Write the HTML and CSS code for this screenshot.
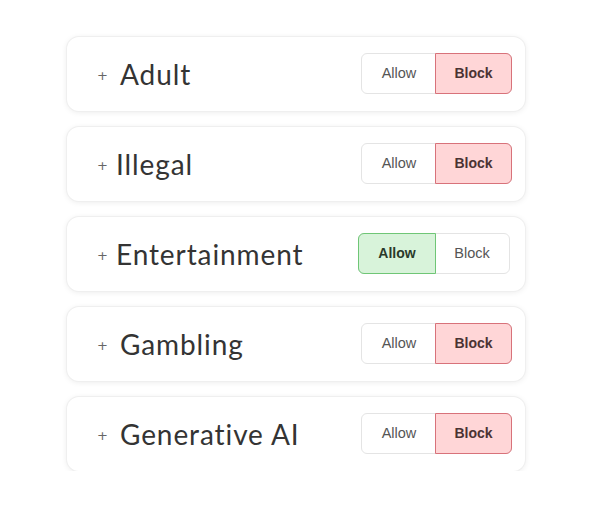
FILE: index.html
```html
<!DOCTYPE html>
<html>
<head>
<meta charset="utf-8">
<link rel="stylesheet" href="styles.css">
</head>
<body>
<div class="list">
  <div class="card">
    <div class="title"><span class="plus">+</span><span class="name">Adult</span></div>
    <div class="toggle"><span class="btn">Allow</span><span class="btn block on">Block</span></div>
  </div>
  <div class="card">
    <div class="title"><span class="plus">+</span><span class="name tight">Illegal</span></div>
    <div class="toggle"><span class="btn">Allow</span><span class="btn block on">Block</span></div>
  </div>
  <div class="card">
    <div class="title"><span class="plus">+</span><span class="name tight">Entertainment</span></div>
    <div class="toggle alt"><span class="btn allow on">Allow</span><span class="btn">Block</span></div>
  </div>
  <div class="card">
    <div class="title"><span class="plus">+</span><span class="name">Gambling</span></div>
    <div class="toggle"><span class="btn">Allow</span><span class="btn block on">Block</span></div>
  </div>
  <div class="card">
    <div class="title"><span class="plus">+</span><span class="name">Generative AI</span></div>
    <div class="toggle"><span class="btn">Allow</span><span class="btn block on">Block</span></div>
  </div>
</div>
</body>
</html>
```
FILE: styles.css
```css
html, body {
  margin: 0;
  padding: 0;
  background: #ffffff;
}
.list {
  display: flex;
  flex-direction: column;
  gap: 16px;
  padding: 37px 0 0 67px;
  width: 458px;
}
.card {
  height: 74px;
  box-sizing: border-box;
  background: #fff;
  border-radius: 12px;
  box-shadow: 0 0 0 1px #efefef, 0 1px 6px rgba(0,0,0,0.09);
  display: flex;
  align-items: center;
  justify-content: space-between;
  padding: 0 13px 0 30px;
}
.title {
  display: flex;
  align-items: center;
  font-family: "Lato", "Open Sans", sans-serif;
  color: #343434;
}
.plus {
  font-family: "DejaVu Sans", sans-serif;
  font-size: 13px;
  color: #666;
  width: 23px;
  margin-top: 2px;
}
.name {
  font-size: 28px;
  letter-spacing: 0.9px;
}
.name.tight {
  margin-left: -4px;
}
.toggle {
  display: flex;
  height: 41px;
  box-sizing: border-box;
  border: 1px solid #e4e4e4;
  border-radius: 6px;
  margin-top: -2px;
  font-family: "Liberation Sans", Arial, sans-serif;
  font-size: 14.5px;
  color: #555;
}
.toggle.alt {
  margin-right: 2px;
}
.btn {
  display: flex;
  align-items: center;
  justify-content: center;
  width: 74px;
  box-sizing: border-box;
}
.btn.on {
  font-weight: bold;
  font-size: 14px;
  margin: -1px;
  height: 41px;
}
.btn.block.on {
  width: 77px;
  background: #ffd6d7;
  border: 1px solid #d8727a;
  border-radius: 0 6px 6px 0;
  color: #4a3333;
}
.btn.allow.on {
  width: 78px;
  background: #d8f3da;
  border: 1px solid #6fc676;
  border-radius: 6px 0 0 6px;
  color: #2a3a2a;
}
```
